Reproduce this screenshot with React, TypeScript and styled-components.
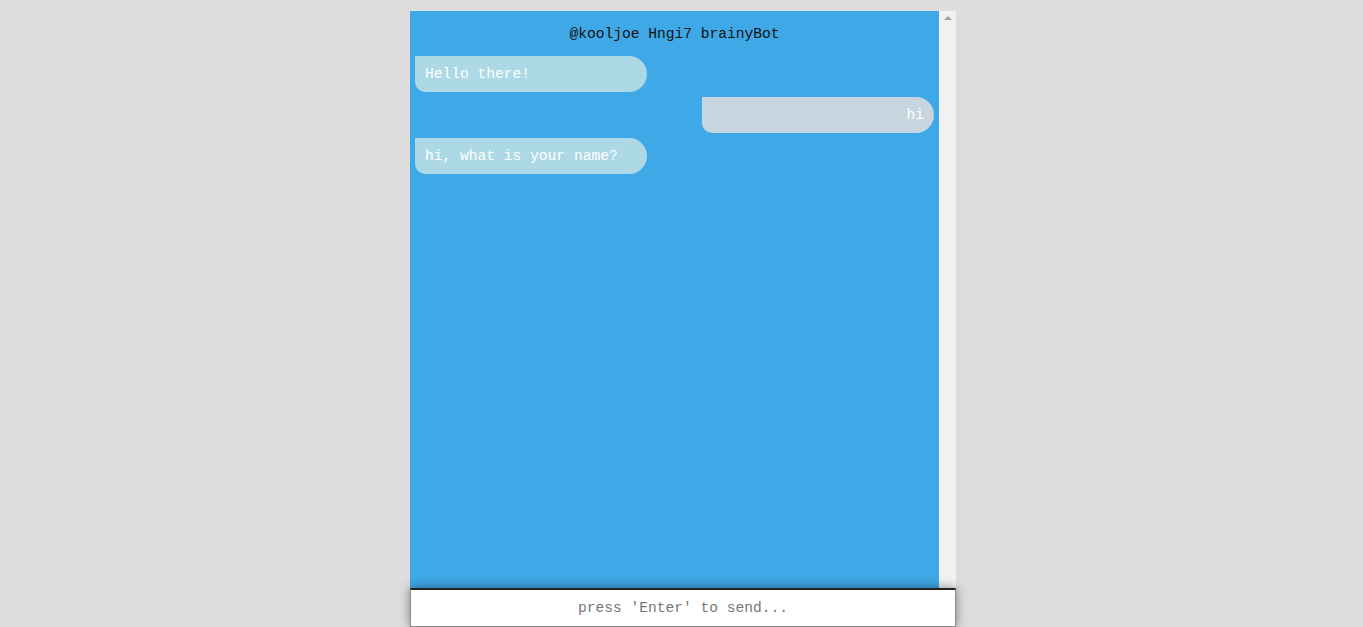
import React from "react";
import styled, { createGlobalStyle } from "styled-components";

const Global = createGlobalStyle`
  html, body { margin: 0; padding: 0; height: 100%; overflow: hidden; }
  body { background: #dddddd; font-family: "Liberation Mono", "Courier New", monospace; }
`;

const Page = styled.div`
  display: flex;
  justify-content: center;
  padding: 11px 0 0 3px;
  height: 627px;
  box-sizing: border-box;
`;

const Frame = styled.div`
  position: relative;
  width: 546px;
  height: 616px;
  display: flex;
`;

const Chat = styled.div`
  flex: 1;
  background: #3fa8e6;
  display: flex;
  flex-direction: column;
  padding: 12px 5px 0 5px;
  gap: 5px;
`;

const Title = styled.div`
  text-align: center;
  color: #111;
  font-size: 14.6px;
  line-height: 22px;
  margin-bottom: 6px;
`;

const Bubble = styled.div<{ $mine?: boolean }>`
  width: 232px;
  height: 36px;
  box-sizing: border-box;
  padding: 0 10px;
  display: flex;
  align-items: center;
  justify-content: ${(p) => (p.$mine ? "flex-end" : "flex-start")};
  align-self: ${(p) => (p.$mine ? "flex-end" : "flex-start")};
  background: ${(p) => (p.$mine ? "#c7d5df" : "#add8e6")};
  color: #fff;
  font-size: 14.6px;
  border-radius: 0 18px 18px 10px;
`;

const Scrollbar = styled.div`
  width: 17px;
  background: #f1f1f1;
  display: flex;
  justify-content: center;
  padding-top: 5px;
  box-sizing: border-box;
`;

const UpArrow = styled.div`
  width: 0;
  height: 0;
  border-left: 4px solid transparent;
  border-right: 4px solid transparent;
  border-bottom: 4px solid #a3a3a3;
`;

const InputBar = styled.div`
  position: absolute;
  left: 0;
  right: 0;
  bottom: 0;
  height: 39px;
  box-sizing: border-box;
  background: #fff;
  border: 1px solid #8a8a8a;
  border-top: 2px solid #222;
  box-shadow: 0 0 10px rgba(0, 0, 0, 0.45);
  display: flex;
  align-items: center;
  justify-content: center;
  color: #777;
  font-size: 14.6px;
`;

export default function App() {
  return (
    <>
      <Global />
      <Page>
        <Frame>
          <Chat>
            <Title>@kooljoe Hngi7 brainyBot</Title>
            <Bubble>Hello there!</Bubble>
            <Bubble $mine>hi</Bubble>
            <Bubble>hi, what is your name?</Bubble>
          </Chat>
          <Scrollbar>
            <UpArrow />
          </Scrollbar>
          <InputBar>press 'Enter' to send...</InputBar>
        </Frame>
      </Page>
    </>
  );
}
